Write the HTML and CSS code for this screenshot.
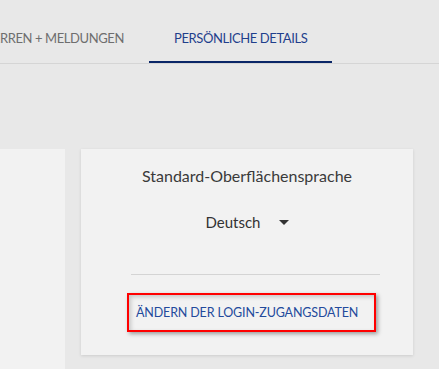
FILE: index.html
```html
<!DOCTYPE html>
<html lang="de">
<head>
    <meta charset="UTF-8">
    <meta name="viewport" content="width=device-width, initial-scale=1.0">
    <title>Persönliche Details</title>
    <link rel="stylesheet" href="styles.css">
</head>
<body>
    <nav class="tabs">
        <a class="tab tab-clipped">SPERREN + MELDUNGEN</a>
        <a class="tab active">PERSÖNLICHE DETAILS</a>
    </nav>

    <div class="cards">
        <div class="card card-left"></div>
        <div class="card card-right">
            <p class="label">Standard-Oberflächensprache</p>
            <div class="select">
                <span>Deutsch</span>
                <span class="caret"></span>
            </div>
            <div class="lower">
                <hr class="divider">
                <a class="login-link">ÄNDERN DER LOGIN-ZUGANGSDATEN</a>
            </div>
        </div>
    </div>
</body>
</html>
```

FILE: styles.css
```css
body {
    margin: 0;
    font-family: 'Lato', 'Open Sans', sans-serif;
    background-color: #e8e8e8;
    color: #333;
    overflow: hidden;
    height: 369px;
}
.tabs {
    display: flex;
    height: 63px;
    border-bottom: 1px solid #d5d5d5;
}
.tab {
    display: flex;
    align-items: center;
    padding: 14px 25px 0;
    font-size: 13px;
    letter-spacing: -0.4px;
    color: #6e6e6e;
    white-space: nowrap;
    box-sizing: border-box;
}
.tab-clipped {
    flex: 0 0 149px;
    justify-content: flex-end;
    overflow: hidden;
    padding-bottom: 2px;
}
.tab.active {
    color: #1f3f8c;
    border-bottom: 2px solid #0a2667;
}
.cards {
    display: flex;
    gap: 16px;
    margin-top: 85px;
    align-items: flex-start;
}
.card {
    background: #f2f2f2;
}
.card-left {
    width: 65px;
    height: 230px;
}
.card-right {
    width: 332px;
    height: 206px;
    box-shadow: 0 1px 3px rgba(0, 0, 0, 0.12);
    text-align: center;
    box-sizing: border-box;
    padding-top: 17px;
}
.label {
    margin: 0;
    font-size: 16px;
    color: #3a3a3a;
}
.select {
    display: flex;
    justify-content: center;
    align-items: center;
    gap: 18px;
    margin-top: 28px;
    font-size: 15px;
    color: #333;
}
.caret {
    width: 0;
    height: 0;
    border-left: 5px solid transparent;
    border-right: 5px solid transparent;
    border-top: 5px solid #333;
    margin-top: 1px;
}
.lower {
    padding: 0 33px 0 50px;
    margin-top: 43px;
    text-align: left;
}
.divider {
    border: none;
    border-top: 1px solid #d4d4d4;
    margin: 0;
}
.login-link {
    display: block;
    margin: 18px 4px 0 -4px;
    height: 39px;
    box-sizing: border-box;
    border: 2px solid #f00;
    padding: 0 7px;
    line-height: 35px;
    font-size: 12.5px;
    letter-spacing: -0.15px;
    color: #234a9c;
    box-shadow: 2px 2px 4px rgba(0, 0, 0, 0.35), inset 2px 2px 4px rgba(0, 0, 0, 0.18);
}
```
